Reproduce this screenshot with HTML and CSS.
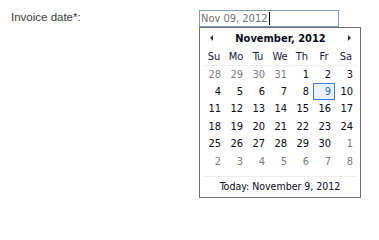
FILE: index.html
```html
<!DOCTYPE html>
<html>
<head>
<meta charset="utf-8">
<link rel="stylesheet" href="styles.css">
</head>
<body>
<div class="form-row">
  <label class="label">Invoice date*:</label>
  <div class="field">
    <div class="input"><span class="value">Nov 09, 2012</span><span class="caret"></span></div>
    <div class="calendar">
      <div class="cal-head">
        <span class="nav prev"></span>
        <span class="title">November, 2012</span>
        <span class="nav next"></span>
      </div>
      <table class="grid">
        <thead>
          <tr><th>Su</th><th>Mo</th><th>Tu</th><th>We</th><th>Th</th><th>Fr</th><th>Sa</th></tr>
        </thead>
        <tbody>
          <tr><td class="other">28</td><td class="other">29</td><td class="other">30</td><td class="other">31</td><td>1</td><td>2</td><td>3</td></tr>
          <tr><td>4</td><td>5</td><td>6</td><td>7</td><td>8</td><td class="selected">9</td><td>10</td></tr>
          <tr><td>11</td><td>12</td><td>13</td><td>14</td><td>15</td><td>16</td><td>17</td></tr>
          <tr><td>18</td><td>19</td><td>20</td><td>21</td><td>22</td><td>23</td><td>24</td></tr>
          <tr><td>25</td><td>26</td><td>27</td><td>28</td><td>29</td><td>30</td><td class="other">1</td></tr>
          <tr><td class="other">2</td><td class="other">3</td><td class="other">4</td><td class="other">5</td><td class="other">6</td><td class="other">7</td><td class="other">8</td></tr>
        </tbody>
      </table>
      <div class="cal-foot">Today: November 9, 2012</div>
    </div>
  </div>
</div>
</body>
</html>
```
FILE: styles.css
```css
html, body {
  margin: 0;
  padding: 0;
  background: #ffffff;
}
.form-row {
  display: flex;
  align-items: flex-start;
  padding: 10px 0 0 11px;
}
.label {
  width: 188px;
  font-family: "Liberation Sans", Arial, sans-serif;
  font-size: 11.5px;
  color: #3c3c3c;
  line-height: 15px;
}
.field {
  display: flex;
  flex-direction: column;
  width: 163px;
}
.input {
  width: 137px;
  height: 15px;
  border: 1px solid #7f9db9;
  display: flex;
  align-items: center;
  padding-left: 1px;
  font-family: "DejaVu Sans Condensed", "DejaVu Sans", sans-serif;
  font-size: 11px;
  color: #6e6e6e;
}
.caret {
  display: inline-block;
  width: 1px;
  height: 13px;
  background: #000;
  margin-left: 1px;
}
.calendar {
  margin-top: 0;
  width: 154px;
  border: 1px solid #6f6f6f;
  padding: 0 3px 0 3px;
  font-family: "DejaVu Sans Condensed", "DejaVu Sans", sans-serif;
  font-size: 11px;
  color: #0a0a20;
  background: #fff;
}
.cal-head {
  height: 20px;
  display: flex;
  align-items: center;
  justify-content: space-between;
  padding: 0 6px 0 7px;
}
.title {
  font-weight: bold;
  font-size: 11px;
  color: #0a0a20;
}
.nav {
  width: 0;
  height: 0;
  border-top: 3px solid transparent;
  border-bottom: 3px solid transparent;
}
.prev {
  border-right: 3px solid #333;
}
.next {
  border-left: 3px solid #333;
}
.grid {
  border-collapse: collapse;
  table-layout: fixed;
  width: 154px;
}
.grid th {
  width: 22px;
  height: 17px;
  padding: 0;
  font-weight: normal;
  text-align: center;
  color: #182040;
  border-bottom: 1px solid #f0f0f0;
}
.grid td {
  width: 22px;
  height: 17.4px;
  padding: 0 4px 0 0;
  box-sizing: border-box;
  text-align: right;
  color: #080818;
}
.grid td.other {
  color: #7c7c7c;
}
.grid td.selected {
  color: #2a6fc9;
  background: #eaf3fd;
  outline: 1px solid #3a7fd0;
  outline-offset: -1px;
}
.cal-foot {
  margin-top: 6px;
  border-top: 1px solid #eeeeee;
  height: 20px;
  line-height: 19px;
  font-size: 10.5px;
  text-align: center;
  color: #0a0a20;
}
```
